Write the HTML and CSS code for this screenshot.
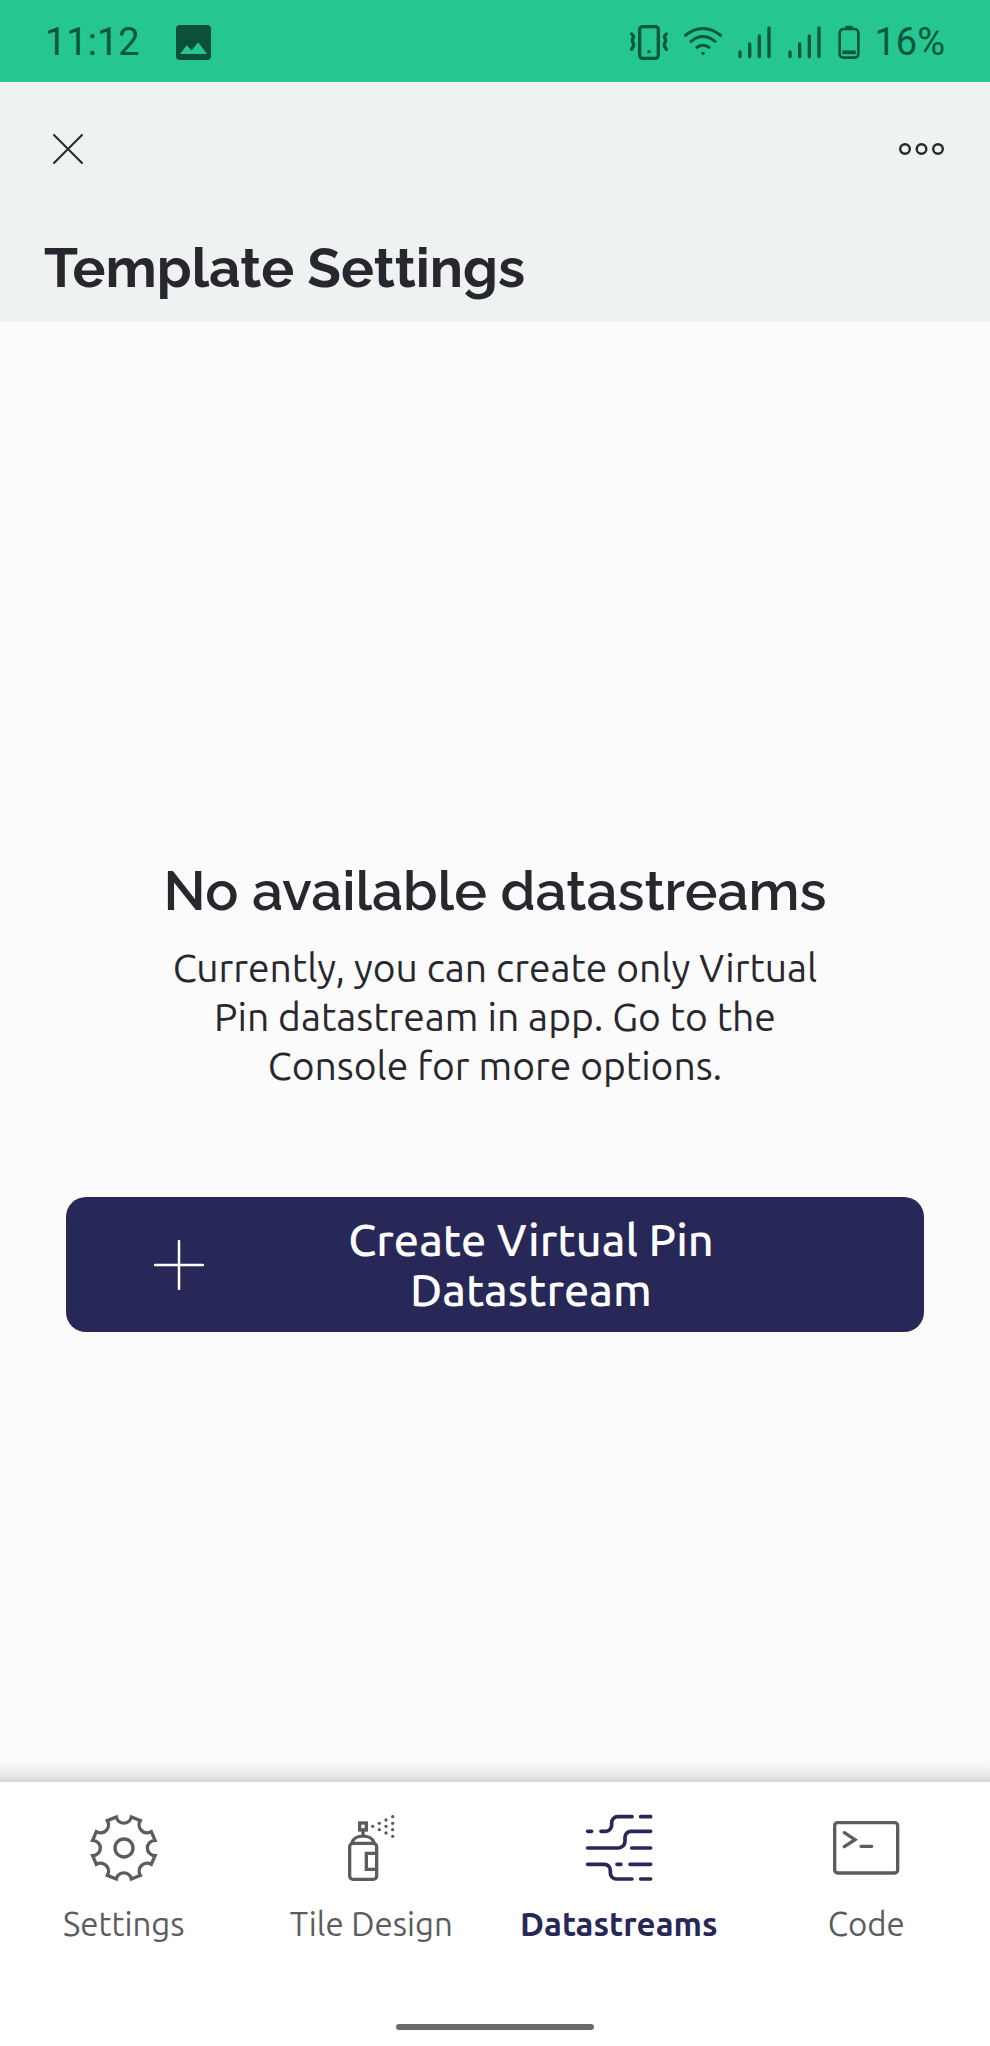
FILE: index.html
```html
<!DOCTYPE html>
<html lang="en">
<head>
<meta charset="utf-8">
<meta name="viewport" content="width=device-width, initial-scale=1">
<title>Template Settings</title>
<link rel="stylesheet" href="styles.css">
</head>
<body>
<div class="status-bar">
  <span class="status-time">11:12</span>
  <svg class="status-photo" viewBox="0 0 104 104" width="35" height="35" aria-hidden="true">
    <path fill="#0d4f3a" fill-rule="evenodd" d="M12 0H92a12 12 0 0 1 12 12V92a12 12 0 0 1-12 12H12A12 12 0 0 1 0 92V12A12 12 0 0 1 12 0ZM12 86H92L66 51 46 76 32 60Z"/>
  </svg>
  <div class="status-icons">
    <svg viewBox="0 0 114 105" width="38" height="35" aria-hidden="true">
      <rect x="29" y="5" width="56" height="95" rx="9" stroke-width="10"/>
      <circle cx="57" cy="80" r="5" class="solid"/>
      <path stroke-width="10" d="M5 27q8 6 4 13t0 13 0 13-4 7M109 27q-8 6-4 13t0 13 0 13 4 7"/>
    </svg>
    <svg viewBox="0 0 114 105" width="38" height="35" aria-hidden="true">
      <path stroke-width="9" d="M4 31Q57-10 110 31M21 49Q57 20 93 49M39 67Q57 54 75 67"/>
      <circle cx="57" cy="85" r="5" class="solid"/>
    </svg>
    <svg viewBox="0 0 102 105" width="34" height="35" aria-hidden="true">
      <path stroke-width="10" d="M6 81V95M35 57V95M64 33V95M93 9V95"/>
    </svg>
    <svg viewBox="0 0 102 105" width="34" height="35" aria-hidden="true">
      <path stroke-width="10" d="M6 81V95M35 57V95M64 33V95M93 9V95"/>
    </svg>
    <svg viewBox="0 0 66 105" width="22" height="35" aria-hidden="true">
      <rect x="5" y="12" width="56" height="86" rx="11" stroke-width="8"/>
      <path stroke-width="7" stroke-linecap="butt" d="M22 6H44"/>
      <path stroke-width="11" stroke-linecap="butt" d="M13 82H53"/>
    </svg>
    <span class="status-battery">16%</span>
  </div>
</div>

<header class="header">
  <div class="toolbar">
    <button class="icon-button" type="button" aria-label="Close">
      <svg viewBox="0 0 48 48" width="48" height="48"><path stroke-width="2" d="M10 10 38 38M38 10 10 38"/></svg>
    </button>
    <button class="icon-button" type="button" aria-label="More options">
      <svg viewBox="0 0 48 48" width="48" height="48"><g stroke-width="2.4"><circle cx="7" cy="24" r="4.8"/><circle cx="23.500" cy="24" r="4.8"/><circle cx="40" cy="24" r="4.8"/></g></svg>
    </button>
  </div>
  <h1 class="title">Template Settings</h1>
</header>

<main class="content">
  <h2 class="empty-title">No available datastreams</h2>
  <p class="empty-text">Currently, you can create only Virtual Pin datastream in app. Go to the Console for more options.</p>
  <button class="create-button" type="button">
    <svg viewBox="0 0 50 50" width="50" height="50" aria-hidden="true"><path stroke-width="2.5" d="M25 1V49M1 25H49"/></svg>
    <span class="create-label">Create Virtual Pin Datastream</span>
  </button>
</main>

<nav class="tabs">
  <a class="tab" href="#settings">
    <svg viewBox="0 0 204 204" width="68" height="68" aria-hidden="true">
      <path d="M79 9A23 23 0 0 0 124 9L151 20A24 24 0 0 0 184 53L195 79A23 23 0 0 0 195 125L184 151A24 24 0 0 0 151 184L124 195A23 23 0 0 0 79 195L52 184A24 24 0 0 0 19 151L8 125A23 23 0 0 0 8 79L19 53A24 24 0 0 0 52 20Z"/>
      <circle cx="102" cy="102" r="27"/>
    </svg>
    <span>Settings</span>
  </a>
  <a class="tab" href="#tile-design">
    <svg viewBox="0 0 204 204" width="68" height="68" aria-hidden="true">
      <rect x="68" y="27" width="20" height="21"/>
      <path d="M78 48V66M45 86C52 60 104 60 111 86"/>
      <rect x="38" y="88" width="81" height="108" rx="10"/>
      <path d="M119 118H88V166H119"/>
      <g class="dots"><circle cx="107" cy="37" r="5"/><circle cx="127" cy="28" r="5"/><circle cx="127" cy="47" r="5"/><circle cx="147" cy="18" r="5"/><circle cx="147" cy="37" r="5"/><circle cx="147" cy="57" r="5"/><circle cx="167" cy="8" r="5"/><circle cx="167" cy="28" r="5"/><circle cx="167" cy="47" r="5"/><circle cx="167" cy="67" r="5"/></g>
    </svg>
    <span>Tile Design</span>
  </a>
  <a class="tab tab-active" href="#datastreams" aria-current="page">
    <svg viewBox="0 0 204 204" width="68" height="68" aria-hidden="true">
      <path d="M8 52H20M48 52H62A18 18 0 0 0 80 34V26A18 18 0 0 1 98 8H141M167 8H197M8 102H100A20 20 0 0 0 120 82V70A18 18 0 0 1 138 52H197M140 102H197M8 151H58A18 18 0 0 1 76 169V177A18 18 0 0 0 94 195H141M96 151H108M135 151H197M167 195H197"/>
    </svg>
    <span>Datastreams</span>
  </a>
  <a class="tab" href="#code">
    <svg viewBox="0 0 204 204" width="68" height="68" aria-hidden="true">
      <rect x="8" y="26" width="189" height="151" rx="9"/>
      <path d="M37 56 69 77 37 98M87 97H119"/>
    </svg>
    <span>Code</span>
  </a>
</nav>
<div class="home-area"><div class="home-bar"></div></div>
</body>
</html>
```
FILE: styles.css
```css
* { box-sizing: border-box; }
body {
  margin: 0;
  min-height: 100vh;
  display: flex;
  flex-direction: column;
  background: #fbfbfb;
  color: #28272e;
  font-family: Ubuntu, "Noto Sans", sans-serif;
}
svg { display: block; flex: none; fill: none; stroke: currentColor; stroke-linecap: round; }
button { border: 0; padding: 0; background: none; color: inherit; font: inherit; }
h1, h2, p { margin: 0; }

.status-bar {
  display: flex;
  align-items: center;
  height: 82px;
  padding: 2px 45px 0;
  background: #25c68f;
  color: #07573d;
  font: 38px/44px Roboto, sans-serif;
}
.status-photo { margin-left: 36px; stroke: none; }
.status-icons { display: flex; align-items: center; gap: 16px; margin-left: auto; }
.status-icons .solid { fill: currentColor; stroke: none; }
.status-battery { margin-left: -2px; }

.header { padding: 43px 44px 12px; background: #eef2f1; }
.toolbar { display: flex; justify-content: space-between; }
.title {
  margin-top: 53px;
  font: 700 55px/84px Raleway, Lato, sans-serif;
}

.content {
  flex: 1;
  display: flex;
  flex-direction: column;
  justify-content: center;
  padding: 84px 66px 0;
}
.empty-title {
  font: 600 55px/68px Raleway, Lato, sans-serif;
  text-align: center;
}
.empty-text {
  max-width: 670px;
  margin: 18px auto 0;
  font-size: 39px;
  line-height: 49px;
  text-align: center;
}
.create-button {
  display: flex;
  align-items: center;
  margin-top: 107px;
  padding: 18px 66px 17px 88px;
  border-radius: 20px;
  background: #272858;
  color: #fff;
}
.create-label {
  flex: 1;
  padding: 0 88px;
  font-size: 45px;
  font-weight: 500;
  line-height: 50px;
}

.tabs {
  position: relative;
  display: grid;
  grid-template-columns: repeat(4, 1fr);
  padding-top: 32px;
  background: #fff;
}
.tabs::before {
  content: "";
  position: absolute;
  inset: -20px 0 auto;
  height: 20px;
  background: linear-gradient(#fbfbfb, #ebebeb 60%, #d6d6d6);
}
.tab {
  display: flex;
  flex-direction: column;
  align-items: center;
  gap: 20px;
  color: #5c5c5f;
  font-size: 33px;
  line-height: 44px;
  text-decoration: none;
}
.tab svg { stroke-width: 10px; }
.tab .dots { fill: currentColor; stroke: none; }
.tab-active { color: #272858; font-weight: 700; }
.tab-active svg { stroke-width: 11px; }

.home-area { display: flex; justify-content: center; padding: 78px 0 16px; background: #fff; }
.home-bar { width: 20%; height: 6px; border-radius: 3px; background: #6a6a6a; }
```
